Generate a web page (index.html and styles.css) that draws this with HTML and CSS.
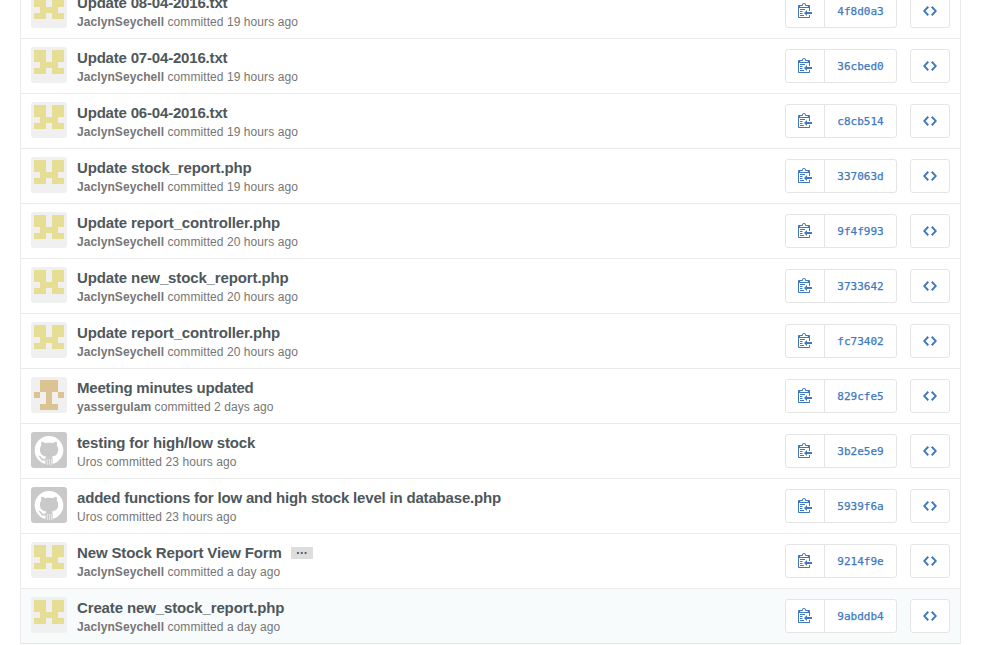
FILE: index.html
```
<!DOCTYPE html>
<html lang="en">
<head>
<meta charset="utf-8">
<title>Commits</title>
<link rel="stylesheet" href="styles.css">
</head>
<body>
<svg class="sprite" aria-hidden="true">
<symbol id="clippy" viewBox="0 0 14 16"><path d="M2 13h4v1H2v-1zm5-6H2v1h5V7zm2 3V8l-3 3 3 3v-2h5v-2H9zM4.500 9H2v1h2.500V9zM2 12h2.500v-1H2v1zm9 1h1v2c-.02.28-.11.52-.3.7-.19.18-.42.28-.7.3H1c-.55 0-1-.45-1-1V4c0-.55.45-1 1-1h3c0-1.110.890-2 2-2 1.110 0 2 .89 2 2h3c.55 0 1 .45 1 1v5h-1V6H1v9h10v-2zM2 5h8c0-.55-.45-1-1-1H8c-.55 0-1-.45-1-1s-.45-1-1-1-1 .45-1 1-.45 1-1 1H3c-.55 0-1 .45-1 1z"/></symbol>
<symbol id="code" viewBox="0 0 14 16"><path d="M9.5 3L8 4.5 11.5 8 8 11.5 9.5 13 14 8 9.5 3zm-5 0L0 8l4.5 5L6 11.5 2.5 8 6 4.5 4.5 3z"/></symbol>
<symbol id="jaclyn" viewBox="0 0 36 36"><path fill="#f0f0f0" d="M0 0h36v36H0z"/><path fill="#e6de94" d="M3 3h12v12h6V3h12v12h-6v6h6v6H21v-6h-6v6H3v-6h6v-6H3z"/></symbol>
<symbol id="yasser" viewBox="0 0 36 36"><path fill="#f0f0f0" d="M0 0h36v36H0z"/><path fill="#dcc492" d="M9 3h18v12h-6v12h6v6H9v-6h6V15H9zM3 15h6v6H3zM27 15h6v6h-6z"/></symbol>
<symbol id="gravatar" viewBox="0 0 36 36"><path fill="#c9c9c9" d="M0 0h36v36H0z"/><path fill="#fff" transform="translate(3.7 3.9) scale(1.79)" d="M8 0C3.58 0 0 3.58 0 8c0 3.54 2.29 6.53 5.47 7.59.4.07.55-.17.55-.38 0-.19-.01-.82-.01-1.49-2.01.37-2.53-.49-2.69-.94-.09-.23-.48-.94-.82-1.13-.28-.15-.68-.52-.01-.53.63-.01 1.08.58 1.23.82.72 1.21 1.87.87 2.33.66.07-.52.28-.87.51-1.07-1.78-.2-3.64-.89-3.64-3.95 0-.87.31-1.59.82-2.15-.08-.2-.36-1.02.08-2.12 0 0 .67-.21 2.2.82.64-.18 1.32-.27 2-.27.68 0 1.36.09 2 .27 1.53-1.04 2.2-.82 2.2-.82.44 1.1.16 1.92.08 2.12.51.56.82 1.27.82 2.15 0 3.07-1.87 3.75-3.65 3.95.29.25.54.73.54 1.48 0 1.07-.01 1.93-.01 2.2 0 .21.15.46.55.38A8.013 8.013 0 0 0 16 8c0-4.42-3.58-8-8-8z"/><path stroke="#fff" stroke-width=".6" d="M16.300 27v6M18.500 27v6M20.700 27v6"/></symbol>
</svg>
<ol class="commits">
<li class="commit"><svg class="avatar"><use href="#jaclyn"/></svg><div class="info"><p class="title date">Update 08-04-2016.txt</p><p class="meta"><b>JaclynSeychell</b> committed 19 hours ago</p></div><div class="group"><a class="copy"><svg class="icon"><use href="#clippy"/></svg></a><a class="sha">4f8d0a3</a></div><a class="browse"><svg class="icon"><use href="#code"/></svg></a></li>
<li class="commit"><svg class="avatar"><use href="#jaclyn"/></svg><div class="info"><p class="title date">Update 07-04-2016.txt</p><p class="meta"><b>JaclynSeychell</b> committed 19 hours ago</p></div><div class="group"><a class="copy"><svg class="icon"><use href="#clippy"/></svg></a><a class="sha">36cbed0</a></div><a class="browse"><svg class="icon"><use href="#code"/></svg></a></li>
<li class="commit"><svg class="avatar"><use href="#jaclyn"/></svg><div class="info"><p class="title date">Update 06-04-2016.txt</p><p class="meta"><b>JaclynSeychell</b> committed 19 hours ago</p></div><div class="group"><a class="copy"><svg class="icon"><use href="#clippy"/></svg></a><a class="sha">c8cb514</a></div><a class="browse"><svg class="icon"><use href="#code"/></svg></a></li>
<li class="commit"><svg class="avatar"><use href="#jaclyn"/></svg><div class="info"><p class="title">Update stock_report.php</p><p class="meta"><b>JaclynSeychell</b> committed 19 hours ago</p></div><div class="group"><a class="copy"><svg class="icon"><use href="#clippy"/></svg></a><a class="sha">337063d</a></div><a class="browse"><svg class="icon"><use href="#code"/></svg></a></li>
<li class="commit"><svg class="avatar"><use href="#jaclyn"/></svg><div class="info"><p class="title">Update report_controller.php</p><p class="meta"><b>JaclynSeychell</b> committed 20 hours ago</p></div><div class="group"><a class="copy"><svg class="icon"><use href="#clippy"/></svg></a><a class="sha">9f4f993</a></div><a class="browse"><svg class="icon"><use href="#code"/></svg></a></li>
<li class="commit"><svg class="avatar"><use href="#jaclyn"/></svg><div class="info"><p class="title">Update new_stock_report.php</p><p class="meta"><b>JaclynSeychell</b> committed 20 hours ago</p></div><div class="group"><a class="copy"><svg class="icon"><use href="#clippy"/></svg></a><a class="sha">3733642</a></div><a class="browse"><svg class="icon"><use href="#code"/></svg></a></li>
<li class="commit"><svg class="avatar"><use href="#jaclyn"/></svg><div class="info"><p class="title">Update report_controller.php</p><p class="meta"><b>JaclynSeychell</b> committed 20 hours ago</p></div><div class="group"><a class="copy"><svg class="icon"><use href="#clippy"/></svg></a><a class="sha">fc73402</a></div><a class="browse"><svg class="icon"><use href="#code"/></svg></a></li>
<li class="commit"><svg class="avatar"><use href="#yasser"/></svg><div class="info"><p class="title date">Meeting minutes updated</p><p class="meta"><b>yassergulam</b> committed 2 days ago</p></div><div class="group"><a class="copy"><svg class="icon"><use href="#clippy"/></svg></a><a class="sha">829cfe5</a></div><a class="browse"><svg class="icon"><use href="#code"/></svg></a></li>
<li class="commit"><svg class="avatar"><use href="#gravatar"/></svg><div class="info"><p class="title">testing for high/low stock</p><p class="meta">Uros committed 23 hours ago</p></div><div class="group"><a class="copy"><svg class="icon"><use href="#clippy"/></svg></a><a class="sha">3b2e5e9</a></div><a class="browse"><svg class="icon"><use href="#code"/></svg></a></li>
<li class="commit"><svg class="avatar"><use href="#gravatar"/></svg><div class="info"><p class="title date">added functions for low and high stock level in database.php</p><p class="meta">Uros committed 23 hours ago</p></div><div class="group"><a class="copy"><svg class="icon"><use href="#clippy"/></svg></a><a class="sha">5939f6a</a></div><a class="browse"><svg class="icon"><use href="#code"/></svg></a></li>
<li class="commit"><svg class="avatar"><use href="#jaclyn"/></svg><div class="info"><p class="title">New Stock Report View Form<span class="more">…</span></p><p class="meta"><b>JaclynSeychell</b> committed a day ago</p></div><div class="group"><a class="copy"><svg class="icon"><use href="#clippy"/></svg></a><a class="sha">9214f9e</a></div><a class="browse"><svg class="icon"><use href="#code"/></svg></a></li>
<li class="commit current"><svg class="avatar"><use href="#jaclyn"/></svg><div class="info"><p class="title">Create new_stock_report.php</p><p class="meta"><b>JaclynSeychell</b> committed a day ago</p></div><div class="group"><a class="copy"><svg class="icon"><use href="#clippy"/></svg></a><a class="sha">9abddb4</a></div><a class="browse"><svg class="icon"><use href="#code"/></svg></a></li>
</ol>
</body>
</html>
```
FILE: styles.css
```
* { box-sizing: border-box; }
html { height: 645px; overflow: hidden; }
body { margin: 0; height: 645px; overflow: hidden; display: flex; align-items: flex-end; background: #fff; font-family: "Liberation Sans", Arial, sans-serif; }
.sprite { display: none; }
.commits { flex: none; width: 941px; margin: 0 0 1px 20px; padding: 0; list-style: none; border: solid #eaeaea; border-width: 0 1px; }
.commit { display: flex; height: 55px; padding: 8px 10px 0; border-bottom: 1px solid #eaeaea; }
.current { background: #f7fbfc; border-bottom-color: #e3e6e6; }
.avatar { flex: none; width: 36px; height: 36px; border-radius: 3px; margin-right: 10px; }
.info { flex: 1; min-width: 0; }
p { margin: 0; white-space: nowrap; }
.title { display: flex; align-items: center; height: 22px; line-height: 22px; font-size: 15px; font-weight: bold; letter-spacing: -.13px; color: #4e575b; }
.date { letter-spacing: -.185px; }
.meta { height: 16px; line-height: 16px; font-size: 12px; letter-spacing: .075px; color: #767676; }
.more { display: flex; justify-content: center; width: 22px; height: 12px; margin-left: 9px; background: #ddd; border-radius: 1px; font-size: 12px; line-height: 6px; letter-spacing: 0; color: #555; }
.group, .browse { display: flex; flex: none; height: 34px; margin-top: 2px; border: 1px solid #e5e5e5; border-radius: 3px; background: #fff; color: #4078c0; }
.group { width: 112px; margin-right: 13px; }
.browse { width: 40px; }
.copy { width: 39px; padding-bottom: 2px; border-right: 1px solid #e5e5e5; }
.copy, .browse { display: flex; align-items: center; justify-content: center; }
.icon { width: 14px; height: 16px; fill: currentColor; }
.sha { flex: 1; text-align: center; font: 11px/33px "DejaVu Sans Mono", monospace; -webkit-text-stroke: .25px #4078c0; }
```
